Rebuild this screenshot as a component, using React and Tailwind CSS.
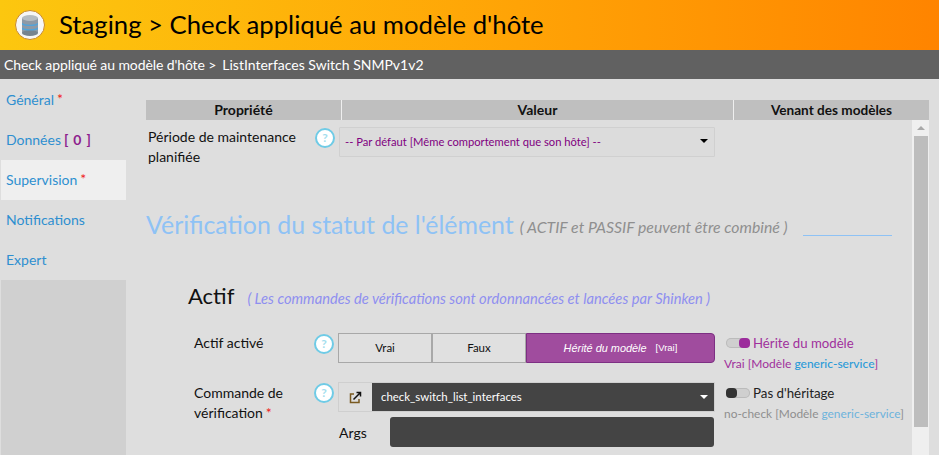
import React from 'react';

function HelpIcon() {
    return (
        <span className="flex h-5 w-5 shrink-0 items-center justify-center rounded-full border-2 border-[#6fcbe6] bg-white text-[12px] font-bold leading-none text-[#a5deee]">?</span>
    );
}

function DbIcon() {
    return (
        <span className="flex h-[30px] w-[30px] items-center justify-center rounded-full border border-[#c98a2a] bg-[#f6f6f6]">
            <svg width="16" height="21" viewBox="0 0 16 21">
                <rect x="0" y="3" width="16" height="15" fill="#8d99a6" />
                <ellipse cx="8" cy="18" rx="8" ry="3" fill="#76838f" />
                <path d="M0 8.500c2 2.400 14 2.400 16 0M0 13c2 2.400 14 2.400 16 0" fill="none" stroke="#4fa3dc" strokeWidth="1.300" />
                <ellipse cx="8" cy="3" rx="8" ry="3" fill="#b5bcc2" />
            </svg>
        </span>
    );
}

function Star() {
    return <span className="ml-[3px] text-[14px] leading-none text-[#f02020]">*</span>;
}

function SideItem({ active, children }) {
    return (
        <div className={`flex h-10 items-center pb-[2px] pl-[5px] text-[14px] text-[#2e8fd0] ${active ? 'bg-[#efefef]' : ''}`}>
            {children}
        </div>
    );
}

function Toggle({ on }) {
    return (
        <span className="relative inline-block h-[10px] w-6 shrink-0 rounded-full bg-[#cfcfcf] shadow-[inset_0_0_0_1px_#bbb]">
            <span className={`absolute top-0 h-[10px] w-[11px] rounded-[4px] ${on ? 'right-0 bg-[#9c2b9c]' : 'left-0 bg-[#333]'}`}></span>
        </span>
    );
}

export default function App() {
    return (
        <div className="flex h-[455px] w-[939px] flex-col overflow-hidden bg-[#dedede] font-['Lato','Liberation_Sans',sans-serif] text-[#111]">
            <header className="flex h-[50px] shrink-0 items-center gap-[14px] bg-gradient-to-r from-[#fcc70f] to-[#ff8400] pl-[15px]">
                <DbIcon />
                <h1 className="text-[25.700px] leading-none text-black">Staging &gt; Check appliqué au modèle d'hôte</h1>
            </header>
            <div className="flex h-[29px] shrink-0 items-center bg-[#616161] pl-1 text-[14px] text-white">
                <span className="tracking-[-0.1px]">Check appliqué au modèle d'hôte &gt;</span>
                <span className="ml-[6px]">ListInterfaces Switch SNMPv1v2</span>
            </div>

            <div className="flex min-h-0 flex-1 pt-px">
                <aside className="ml-px flex w-[125px] shrink-0 flex-col">
                    <SideItem>Général<Star /></SideItem>
                    <SideItem>
                        Données
                        <span className="ml-[3px] whitespace-pre text-[14px] font-bold tracking-[0.800px] text-[#8e1f8e]">[ 0 ]</span>
                    </SideItem>
                    <SideItem active>Supervision<Star /></SideItem>
                    <SideItem>Notifications</SideItem>
                    <SideItem>Expert</SideItem>
                    <div className="flex-1 bg-[#d0d0d0]"></div>
                </aside>

                <main className="ml-5 flex w-[783px] shrink-0 flex-col pt-5">
                    <div className="grid h-5 shrink-0 grid-cols-[195px_391px_1fr] gap-px bg-[#efefef] text-center text-[14px] font-bold leading-5">
                        <div className="bg-[#bfbfbf]">Propriété</div>
                        <div className="bg-[#bfbfbf]">Valeur</div>
                        <div className="bg-[#bfbfbf] text-[13.600px]">Venant des modèles</div>
                    </div>

                    <div className="flex min-h-0 flex-1">
                        <div className="min-w-0 flex-1 overflow-hidden">
                            <section className="flex pt-[7px]">
                                <div className="w-[168px] pl-[2px] text-[14px] leading-5">Période de maintenance planifiée</div>
                                <div className="ml-[1px] w-[25px] pt-px"><HelpIcon /></div>
                                <div className="ml-[-1px] flex h-[30px] w-[376px] items-center justify-between rounded-[1px] border border-[#d0d0d0] bg-[#dcdcdc] pl-[5px] pr-[6px] text-[11.200px] text-[#800080]">
                                    <span>-- Par défaut [Même comportement que son hôte] --</span>
                                    <span className="mb-[3px] h-0 w-0 border-x-[4px] border-t-[4px] border-x-transparent border-t-black"></span>
                                </div>
                            </section>

                            <div className="mt-[42px] flex items-end">
                                <h2 className="text-[24.900px] leading-[30px] text-[#8ec2f5]">Vérification du statut de l'élément</h2>
                                <span className="ml-[6px] pb-[2px] text-[15.800px] italic leading-5 text-[#8f8f8f]">( ACTIF et PASSIF peuvent être combiné )</span>
                                <span className="mb-[3px] ml-[15px] h-px w-[89px] bg-[#8ec2f5]"></span>
                            </div>

                            <div className="mt-[44px] flex items-baseline pl-[42px]">
                                <h3 className="text-[22px] leading-[26px] text-[#111]">Actif</h3>
                                <span className="ml-[13px] text-[14.700px] italic text-[#8f8ff0]">( Les commandes de vérifications sont ordonnancées et lancées par Shinken )</span>
                            </div>

                            <section className="mt-[24px] flex pl-[48px]">
                                <div className="w-[120px] text-[14px] leading-5">Actif activé</div>
                                <div className="w-[24px] pt-px"><HelpIcon /></div>
                                <div className="flex h-[30px] w-[377px] text-[11.500px]">
                                    <div className="flex w-[94px] items-center justify-center border border-[#a8a8a8] bg-[#e0e0e0]">Vrai</div>
                                    <div className="flex w-[94px] items-center justify-center border border-[#a8a8a8] bg-[#e0e0e0]">Faux</div>
                                    <div className="flex flex-1 items-center justify-center gap-[9px] rounded-r-[4px] border border-[#7d2f83] bg-[#a04c9e] text-white">
                                        <span className="font-['Liberation_Sans',sans-serif] text-[10.900px] italic">Hérité du modèle</span>
                                        <span className="font-['Liberation_Sans',sans-serif] text-[9.500px]">[Vrai]</span>
                                    </div>
                                </div>
                                <div className="ml-[9px]">
                                    <div className="flex items-center text-[13.200px] leading-[20px] text-[#a0309c]"><span className="ml-[2px]"><Toggle on /></span><span className="ml-[3px]">Hérite du modèle</span></div>
                                    <div className="mt-[3px] text-[12px] leading-4 text-[#a0309c]">Vrai [Modèle <span className="font-medium text-[#2a9ad8]">generic-service</span>]</div>
                                </div>
                            </section>

                            <section className="mt-[10px] flex pl-[48px]">
                                <div className="w-[120px] pt-px text-[14px] leading-5">Commande de vérification<Star /></div>
                                <div className="w-[24px] pt-px"><HelpIcon /></div>
                                <div className="w-[377px]">
                                    <div className="flex h-[30px] border border-[#cfcfcf]">
                                        <div className="flex w-[33px] items-center justify-center bg-[#dedede]">
                                            <svg width="13" height="13" viewBox="0 0 13 13" fill="none" stroke="#111" strokeWidth="1.500">
                                                <path d="M5 3H1.500v8.500H10V8" stroke="#7a5a20" />
                                                <path d="M4.500 8.500 11 2M7.500 1.500H11.500V5.500" />
                                            </svg>
                                        </div>
                                        <div className="flex flex-1 items-center justify-between bg-[#444] pl-[9px] pr-[6px] text-[11.400px] text-white">
                                            <span>check_switch_list_interfaces</span>
                                            <span className="h-0 w-0 border-x-[4px] border-t-[4px] border-x-transparent border-t-white"></span>
                                        </div>
                                    </div>
                                    <div className="mt-[5px] flex items-center">
                                        <span className="w-[52px] pl-px text-[14px]">Args</span>
                                        <div className="h-[30px] w-[324px] rounded-[3px] bg-[#444]"></div>
                                    </div>
                                </div>
                                <div className="ml-[9px] pt-[1px]">
                                    <div className="flex items-center text-[13.300px] leading-[20px] text-[#222]"><span className="ml-[2px]"><Toggle /></span><span className="ml-[3px]">Pas d'héritage</span></div>
                                    <div className="mt-[3px] whitespace-nowrap text-[11.900px] leading-4 text-[#8f8f8f]">no-check [Modèle <span className="text-[#6db3dc]">generic-service</span>]</div>
                                </div>
                            </section>
                        </div>

                        <div className="flex w-[17px] shrink-0 flex-col items-center bg-[#efefef] pt-[6px]">
                            <span className="h-0 w-0 border-x-[4px] border-b-[4px] border-x-transparent border-b-[#a8a8a8]"></span>
                            <div className="mt-[6px] h-[291px] w-[14px] bg-[#bdbdbd]"></div>
                        </div>
                    </div>
                </main>
            </div>
        </div>
    );
}
